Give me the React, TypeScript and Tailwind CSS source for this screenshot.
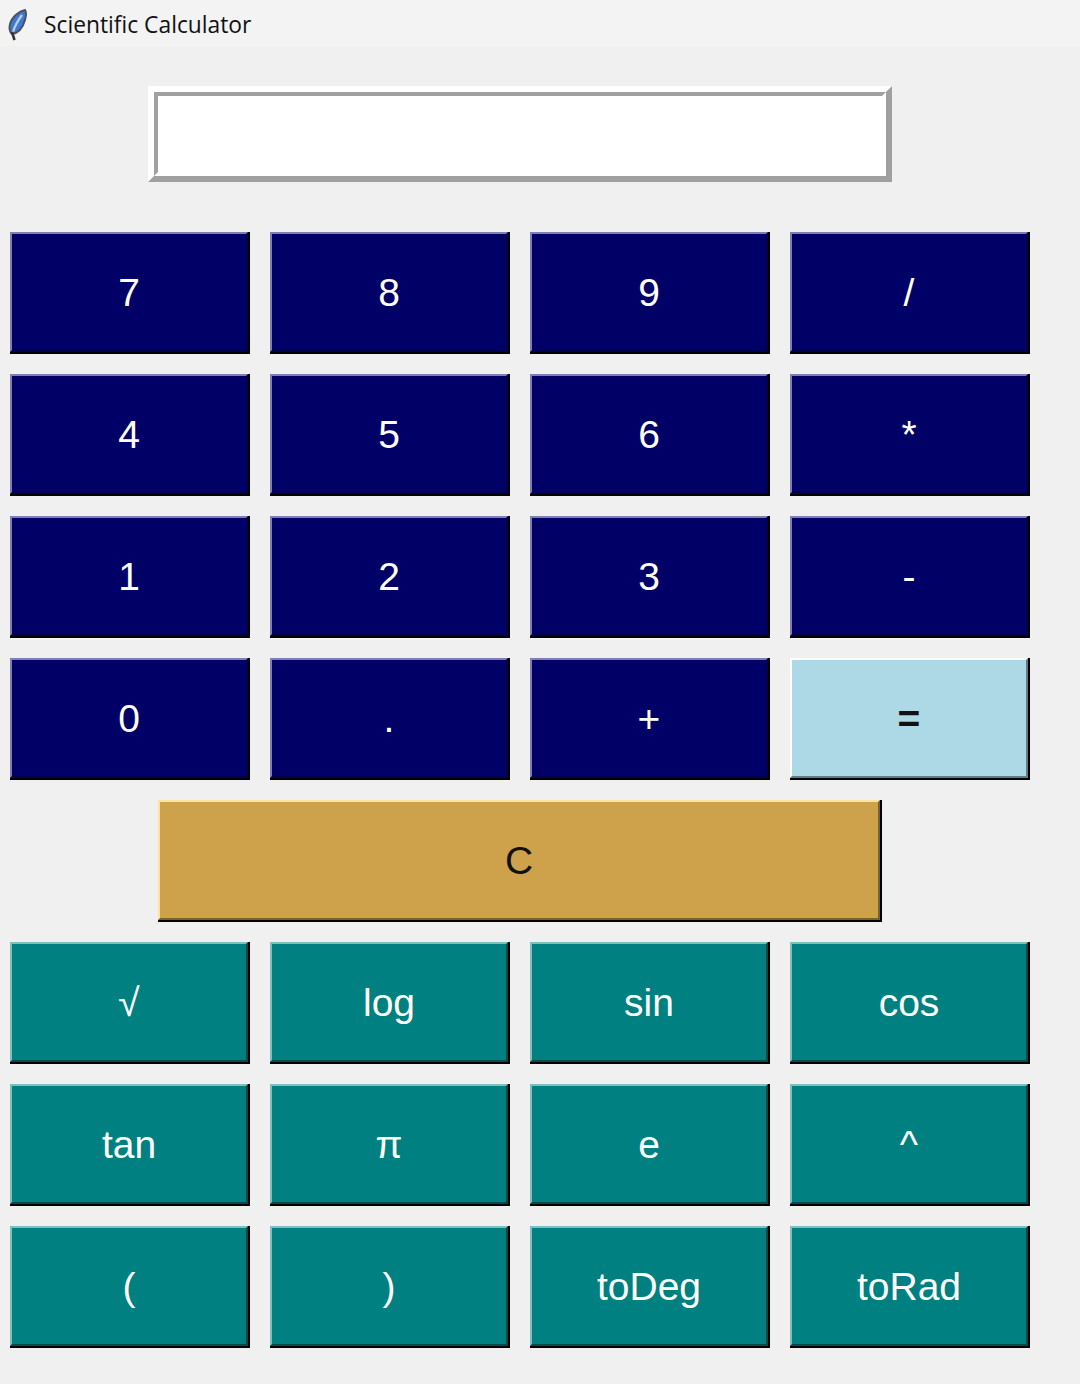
const font = "font-['Liberation_Sans',Arial,sans-serif]";

const navy = 'bg-[#000066] text-white border-t-[#7f7fb2] border-l-[#7f7fb2] border-r-[#00004c] border-b-[#00004c]';
const sky = 'bg-[#add8e6] text-[#111111] border-t-[#ffffff] border-l-[#ffffff] border-r-[#5f7b84] border-b-[#5f7b84]';
const gold = 'bg-[#cea24b] text-[#111111] border-t-[#ffe3a0] border-l-[#ffe3a0] border-r-[#7a6128] border-b-[#7a6128]';
const teal = 'bg-[#008080] text-white border-t-[#7fbfbf] border-l-[#7fbfbf] border-r-[#004c4c] border-b-[#004c4c]';

function CalcButton({ label, color, wide = false, bold = false }: { label: string; color: string; wide?: boolean; bold?: boolean }) {
  return (
    <div className={`${wide ? 'w-[724px]' : 'w-full'} h-[122px] border-r-2 border-b-2 border-black`}>
      <div className={`w-full h-full border-2 flex items-center justify-center text-[39px] leading-none ${bold ? 'font-bold' : 'font-normal'} ${font} ${color}`}>
        {label}
      </div>
    </div>
  );
}

function Feather() {
  return (
    <svg width="24" height="36" viewBox="0 0 24 36" className="ml-[5px] mt-[3px]">
      <path d="M20 3C14 4 7 10 5 17C4 21 4 24 7 27C14 26 18 20 20 13C21 9 22 6 20 3Z" fill="#3d7ad0" stroke="#4a525e" strokeWidth="2" />
      <path d="M17 8C14 12 10 18 8 25" fill="none" stroke="#b9cfea" strokeWidth="2.2" />
      <path d="M7 25L9.5 33" fill="none" stroke="#333333" strokeWidth="2.6" />
    </svg>
  );
}

const digits = ['7', '8', '9', '/', '4', '5', '6', '*', '1', '2', '3', '-', '0', '.', '+'];
const sciKeys = ['√', 'log', 'sin', 'cos', 'tan', 'π', 'e', '^', '(', ')', 'toDeg', 'toRad'];

export default function App() {
  return (
    <div className="w-[1080px] h-[1384px] bg-[#f0f0f0] overflow-hidden">
      <div className="h-[46px] bg-[#f3f3f3] flex items-center">
        <Feather />
        <span className="ml-[15px] mt-[4px] text-[22.8px] text-[#111111] font-['Open_Sans',sans-serif]">Scientific Calculator</span>
      </div>

      <div className="w-[1040px] pl-[10px] box-content">
        <div className="w-[1020px] flex flex-col items-center">
          <div className="mt-[40px] w-[744px] h-[96px] border-[6px] border-t-white border-l-white border-r-[#a0a0a0] border-b-[#a0a0a0]">
            <div className="w-full h-full bg-white border-4 border-t-[#a0a0a0] border-l-[#a0a0a0] border-r-white border-b-white" />
          </div>

          <div className="mt-[50px] w-full grid grid-cols-4 gap-x-5 gap-y-5">
            {digits.map((d) => (
              <CalcButton key={d} label={d} color={navy} />
            ))}
            <CalcButton label="=" color={sky} bold />
          </div>

          <div className="mt-5">
            <CalcButton label="C" color={gold} wide />
          </div>

          <div className="mt-5 w-full grid grid-cols-4 gap-x-5 gap-y-5">
            {sciKeys.map((k) => (
              <CalcButton key={k} label={k} color={teal} />
            ))}
          </div>
        </div>
      </div>
    </div>
  );
}
